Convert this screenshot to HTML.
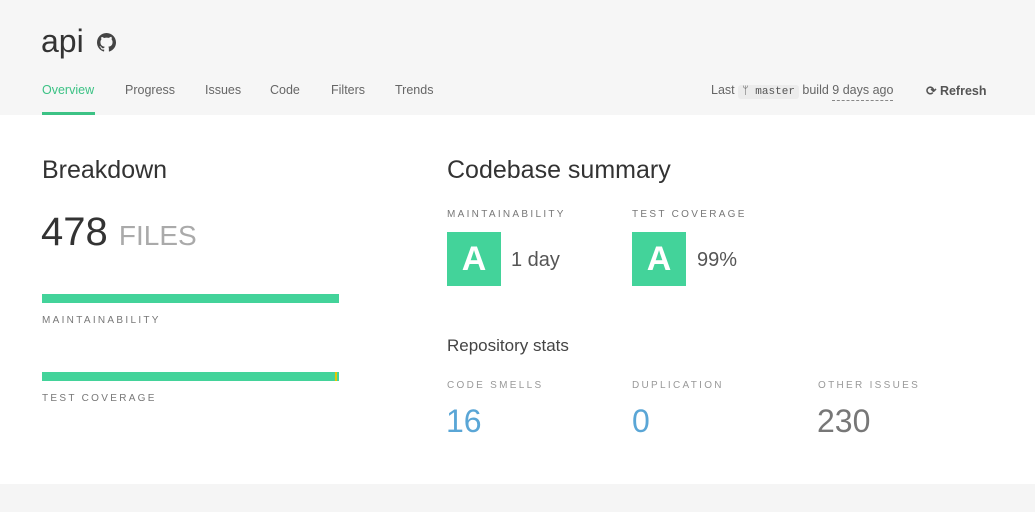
<!DOCTYPE html>
<html><head><style>
body{margin:0;width:1035px;height:512px;background:#f5f5f5;font-family:"Liberation Sans",sans-serif;overflow:hidden;position:relative}
.a{position:absolute;white-space:nowrap}
.hdr{position:absolute;left:0;top:0;width:1035px;height:115px;background:#f6f6f6}
.main{position:absolute;left:0;top:115px;width:1035px;height:369px;background:#fff}
.nav{font-size:12.5px;color:#666;top:83px}
.lbl{font-size:10px;letter-spacing:2.3px;color:#777}
.grade{position:absolute;width:54px;height:54px;background:#43d39a;color:#fff;font-weight:bold;font-size:34px;text-align:center;line-height:54px}
</style></head><body>
<div class="hdr"></div>
<div class="main"></div>
<div class="a" style="left:41px;top:23px;font-size:32px;color:#333;font-weight:300">api</div>
<svg class="a" style="left:97px;top:33px" width="19" height="19" viewBox="0 0 16 16"><path fill="#444" d="M8 0C3.58 0 0 3.58 0 8c0 3.540 2.29 6.53 5.47 7.59.4.07.55-.17.55-.38v-1.33c-2.23.48-2.7-1.070-2.7-1.07-.36-.92-.89-1.17-.89-1.17-.73-.5.05-.49.05-.49.8.06 1.23.83 1.23.83.71 1.22 1.87.87 2.33.66.07-.52.28-.87.51-1.07-1.78-.2-3.65-.89-3.650-3.95 0-.87.31-1.59.82-2.15-.08-.2-.36-1.02.08-2.12 0 0 .67-.21 2.2.82A7.7 7.7 0 0 1 8 3.87c.68 0 1.36.09 2 .27 1.53-1.04 2.2-.82 2.2-.82.44 1.1.16 1.92.08 2.12.51.56.82 1.27.82 2.15 0 3.07-1.87 3.75-3.65 3.95.29.25.54.73.54 1.48v2.2c0 .21.15.46.55.38A8.01 8.01 0 0 0 16 8c0-4.42-3.58-8-8-8z"/></svg>
<div class="a nav" style="left:42px;color:#3cc285">Overview</div>
<div class="a" style="left:42px;top:112px;width:53px;height:3px;background:#3cc285"></div>
<div class="a nav" style="left:125px">Progress</div>
<div class="a nav" style="left:205px">Issues</div>
<div class="a nav" style="left:270px">Code</div>
<div class="a nav" style="left:331px">Filters</div>
<div class="a nav" style="left:395px">Trends</div>
<div class="a" style="left:711px;top:83px;font-size:12.5px;color:#666">Last <span style="background:#ececec;border-radius:3px;padding:1px 4px;font-family:'Liberation Mono',monospace;font-size:11px;color:#555">ᛘ master</span> build <span style="border-bottom:1px dashed #888;padding-bottom:3px">9 days ago</span></div>
<div class="a" style="left:926px;top:83px;font-size:12.5px;color:#555;font-weight:bold">⟳ Refresh</div>

<div class="a" style="left:42px;top:156px;font-size:25px;color:#333">Breakdown</div>
<div class="a" style="left:41px;top:210px;font-size:40px;color:#333;font-weight:300">478 <span style="font-size:28px;color:#aaa">FILES</span></div>
<div class="a" style="left:42px;top:294px;width:297px;height:9px;background:#43d39a"></div>
<div class="a lbl" style="left:42px;top:315px">MAINTAINABILITY</div>
<div class="a" style="left:42px;top:372px;width:297px;height:9px;background:#43d39a"></div>
<div class="a" style="left:335px;top:372px;width:2px;height:9px;background:#e6c700"></div>
<div class="a lbl" style="left:42px;top:393px">TEST COVERAGE</div>

<div class="a" style="left:447px;top:156px;font-size:25px;color:#333">Codebase summary</div>
<div class="a lbl" style="left:447px;top:209px">MAINTAINABILITY</div>
<div class="grade" style="left:447px;top:232px">A</div>
<div class="a" style="left:511px;top:249px;font-size:20px;color:#555">1 day</div>
<div class="a lbl" style="left:632px;top:209px">TEST COVERAGE</div>
<div class="grade" style="left:632px;top:232px">A</div>
<div class="a" style="left:697px;top:249px;font-size:20px;color:#555">99%</div>
<div class="a" style="left:447px;top:336px;font-size:17px;color:#444">Repository stats</div>
<div class="a lbl" style="left:447px;top:380px;color:#999">CODE SMELLS</div>
<div class="a" style="left:446px;top:403px;font-size:32px;color:#5aa6d6;font-weight:300">16</div>
<div class="a lbl" style="left:632px;top:380px;color:#999">DUPLICATION</div>
<div class="a" style="left:632px;top:403px;font-size:32px;color:#5aa6d6;font-weight:300">0</div>
<div class="a lbl" style="left:818px;top:380px;color:#999">OTHER ISSUES</div>
<div class="a" style="left:817px;top:403px;font-size:32px;color:#777;font-weight:300">230</div>
</body></html>
